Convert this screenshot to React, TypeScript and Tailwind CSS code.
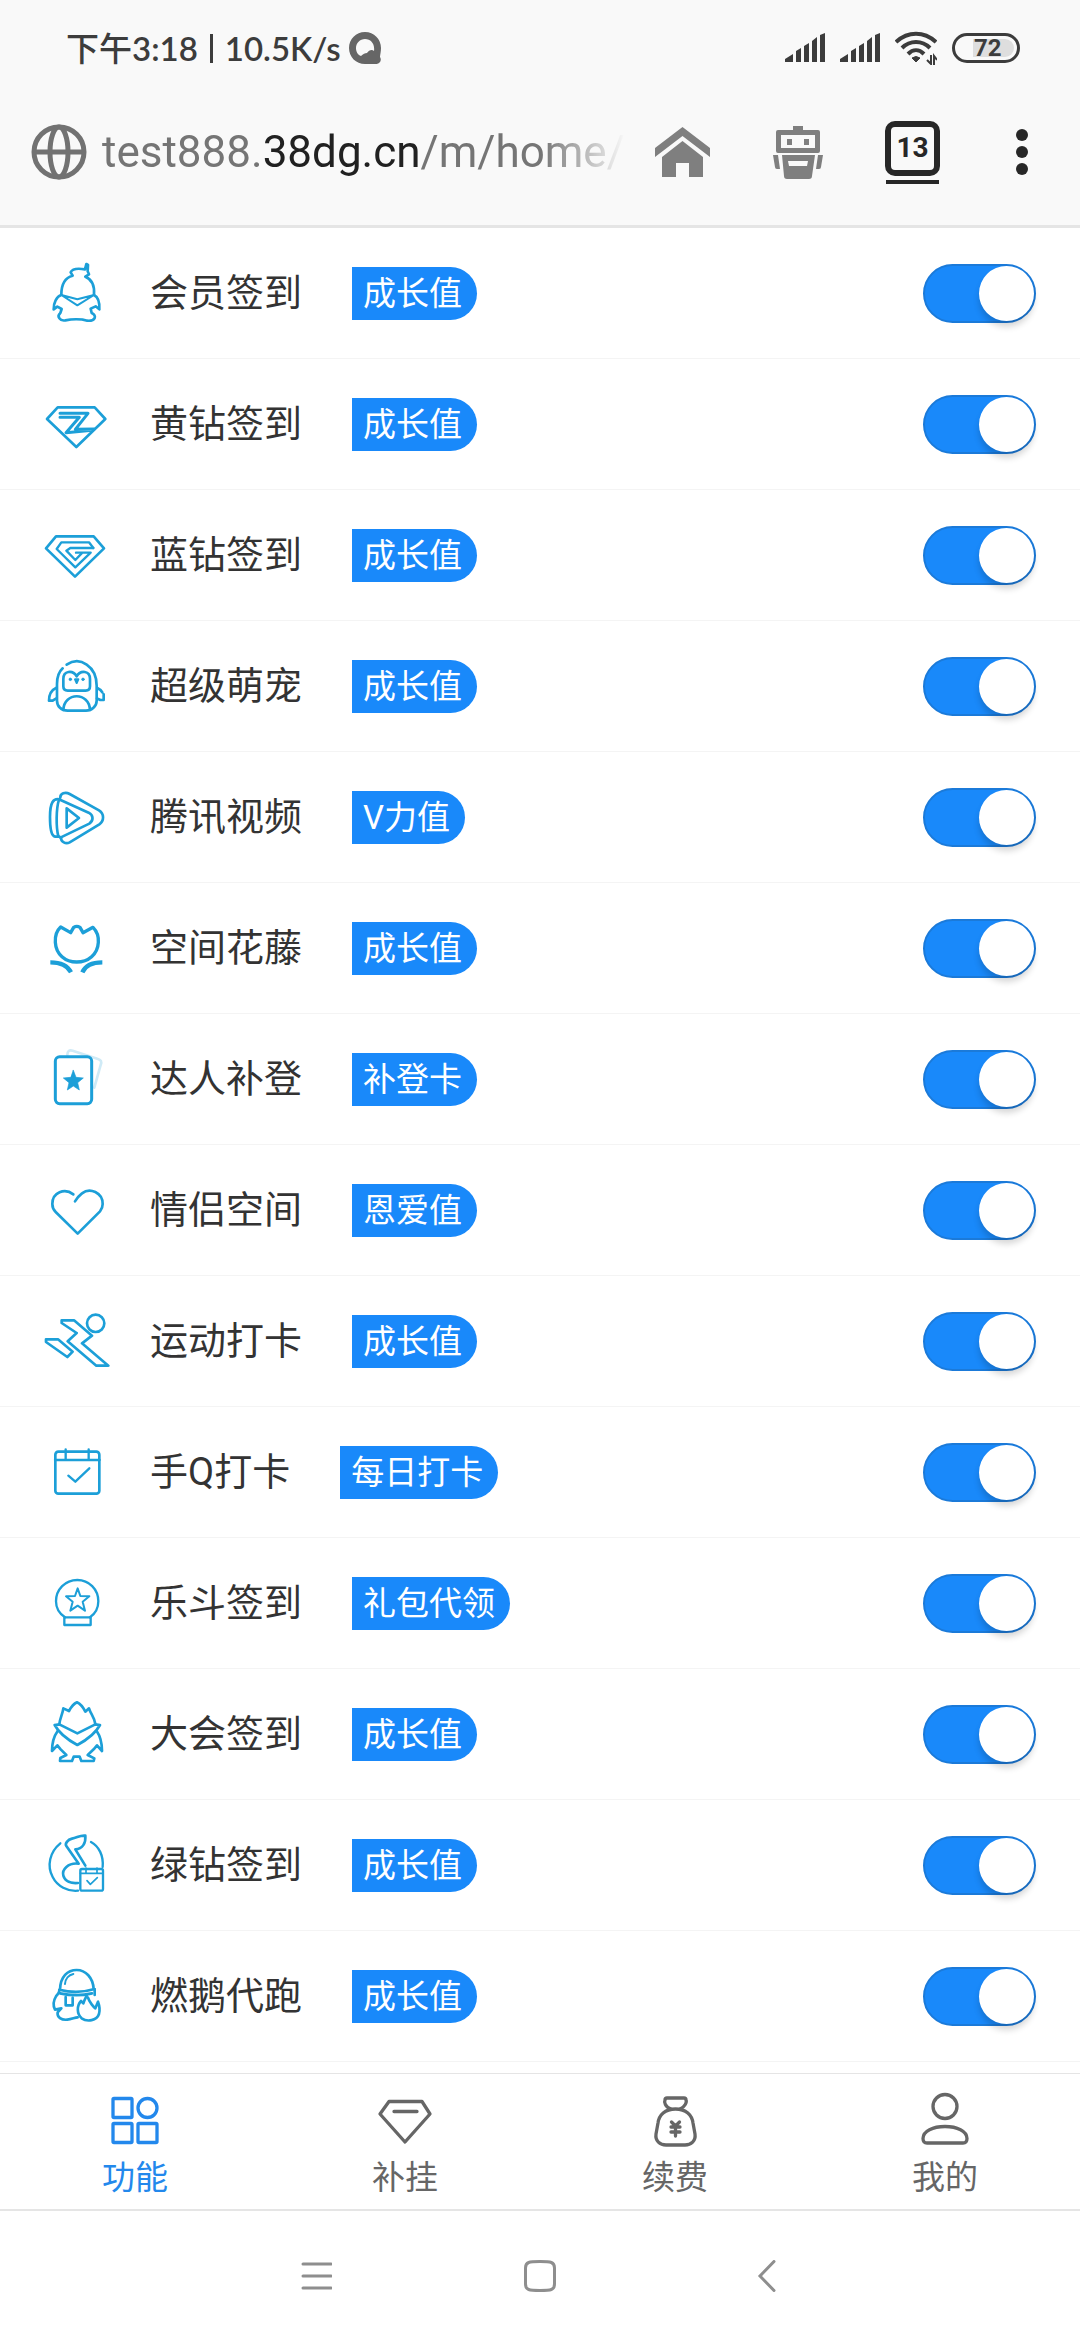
import type { ReactNode } from 'react';

interface Feature {
  id: string;
  name: string;
  tag: string;
  icon: ReactNode;
}

interface LineIconProps {
  viewBox: string;
  children: ReactNode;
}

// Shared wrapper for the blue line icons in front of each feature
function LineIcon({ viewBox, children }: LineIconProps) {
  return (
    <svg
      viewBox={viewBox}
      className="size-[66px] shrink-0 text-[#1c9fd8]"
      fill="none"
      stroke="currentColor"
      strokeWidth={8}
      strokeLinecap="round"
      strokeLinejoin="round"
      aria-hidden="true"
    >
      {children}
    </svg>
  );
}

const features: Feature[] = [
  {
    id: 'member',
    name: '会员签到',
    tag: '成长值',
    icon: (
      <LineIcon viewBox="132 93 198 198">
        <path d="M184 197C184 168 195 146 218 140L212 130C216 121 232 117 255 121L259 105L264 108L263 127L267 136L256 143C276 151 284 172 282 197" />
        <path d="M184 198L232 211L282 198L232 229Z" strokeWidth={6} />
        <path d="M184 198C170 202 160 222 161 241L172 233L185 240L181 252C169 262 180 277 196 274C215 270 245 270 262 275C286 277 292 260 275 252L272 239L287 232L298 241C299 222 294 204 282 198" />
      </LineIcon>
    ),
  },
  {
    id: 'yellow',
    name: '黄钻签到',
    tag: '成长值',
    icon: (
      <LineIcon viewBox="132 486 198 198">
        <path d="M173 535H284L316 570L229 654L141 570Z" />
        <path d="M180 553H264L226 601L282 600M180 565H238L198 611L276 604" strokeWidth={9} />
      </LineIcon>
    ),
  },
  {
    id: 'blue',
    name: '蓝钻签到',
    tag: '成长值',
    icon: (
      <LineIcon viewBox="132 879 198 198">
        <path d="M168 922H281L312 958L225 1043L138 958Z" />
        <path d="M280 957L267 940H184L170 960L226 1015L272 971H228" strokeWidth={7} />
        <path d="M280 957H211L199 965L226 993L245 973" strokeWidth={7} />
      </LineIcon>
    ),
  },
  {
    id: 'pet',
    name: '超级萌宠',
    tag: '成长值',
    icon: (
      <LineIcon viewBox="132 102 198 198">
        <path d="M200 137C240 110 290 142 290 200V245C290 262 275 275 258 275H203C184 275 171 262 171 245V195C171 175 177 158 188 148" />
        <path d="M190 202V180C190 155 218 152 230 172C242 152 270 155 270 180V202C270 210 265 215 257 215H203C195 215 190 210 190 202Z" />
        <circle cx="211" cy="181" r="4" fill="currentColor" strokeWidth={2} />
        <circle cx="249" cy="181" r="4" fill="currentColor" strokeWidth={2} />
        <path d="M225 181H235L230 192Z" fill="currentColor" strokeWidth={6} />
        <path d="M190 273C192 218 268 218 270 273" />
        <path d="M168 207C155 213 147 228 147 245H158L169 238M292 207C301 211 305 216 307 220M311 226V243H301L291 238" />
      </LineIcon>
    ),
  },
  {
    id: 'video',
    name: '腾讯视频',
    tag: 'V力值',
    icon: (
      <LineIcon viewBox="132 495 198 198">
        <path d="M181 536C180 523 196 518 209 525L297 574C313 584 313 606 298 616L209 670C197 676 183 669 183 656" />
        <path d="M180 542L266 581C281 589 281 605 268 614L181 656" />
        <path d="M178 541C160 538 150 550 150 594C150 628 154 646 161 651C166 654 173 653 178 653" />
        <path d="M177 542C168 570 168 625 175 652" />
        <path d="M200 568L237 597L200 626Z" />
      </LineIcon>
    ),
  },
  {
    id: 'flower',
    name: '空间花藤',
    tag: '成长值',
    icon: (
      <LineIcon viewBox="132 888 198 198">
        <path
          d="M212 941L182 924C169 936 165 955 166 970C168 1006 196 1029 230 1029C265 1029 293 1006 295 970C296 955 292 938 279 925L249 941L240 925C235 922 226 922 221 925L212 941Z"
          strokeWidth={10}
        />
        <path d="M151 1030C178 1030 202 1038 213 1060M307 1030C280 1030 256 1038 247 1060" strokeWidth={13} strokeLinecap="butt" />
      </LineIcon>
    ),
  },
  {
    id: 'talent',
    name: '达人补登',
    tag: '补登卡',
    icon: (
      <LineIcon viewBox="132 111 198 198">
        <path d="M202 138C202 126 208 122 218 125L292 149C303 152 306 158 302 168L283 236" className="text-[#cfeaf6]" stroke="currentColor" />
        <rect x="166" y="143" width="109" height="141" rx="13" fill="#fff" strokeWidth={9} />
        <path
          d="M220 184L228 205L250 207L233 221L238 243L220 231L202 243L207 221L190 207L212 205Z"
          fill="currentColor"
          strokeWidth={2}
        />
      </LineIcon>
    ),
  },
  {
    id: 'couple',
    name: '情侣空间',
    tag: '恩爱值',
    icon: (
      <LineIcon viewBox="132 504 198 198">
        <path d="M220 556C194 536 157 550 157 585C157 595 161 603 167 609L233 674L300 607C306 600 308 593 308 585C308 551 270 534 246 553C238 559 231 567 225 577" />
      </LineIcon>
    ),
  },
  {
    id: 'sport',
    name: '运动打卡',
    tag: '成长值',
    icon: (
      <LineIcon viewBox="132 897 198 198">
        <circle cx="287" cy="943" r="26" />
        <path d="M185 934H222L276 980L246 1003L325 1070H289L203 997L230 972L185 942Z" />
        <path d="M138 991H174L218 1028L202 1044L138 999Z" />
      </LineIcon>
    ),
  },
  {
    id: 'mobile-q',
    name: '手Q打卡',
    tag: '每日打卡',
    icon: (
      <LineIcon viewBox="132 90 198 198">
        <rect x="166" y="128" width="132" height="126" rx="9" />
        <path d="M165 153H299M197 121V151M266 121V151M205 200L226 218L268 178" strokeWidth={7} />
      </LineIcon>
    ),
  },
  {
    id: 'fight',
    name: '乐斗签到',
    tag: '礼包代领',
    icon: (
      <LineIcon viewBox="132 483 198 198">
        <path d="M195 625C178 614 168 596 168 577C168 541 196 513 232 513C267 513 295 541 295 577C295 596 286 614 270 625" strokeWidth={7} />
        <rect x="193" y="625" width="79" height="23" strokeWidth={7} />
        <path d="M233 538L241 561L268 562L248 578L255 605L233 590L211 605L218 578L198 562L225 561Z" strokeWidth={6} />
      </LineIcon>
    ),
  },
  {
    id: 'party',
    name: '大会签到',
    tag: '成长值',
    icon: (
      <LineIcon viewBox="132 876 198 198">
        <path d="M178 945C180 927 188 915 190 898L207 906C213 895 222 884 231 880C240 884 250 896 256 908L267 898C272 915 284 925 286 945" />
        <path d="M164 948L178 946L232 973L286 946L300 948C284 978 256 995 232 1008C208 995 180 978 164 948Z" />
        <path d="M173 966C160 984 156 1005 156 1026L172 1009L182 1021L199 1038L181 1047L180 1056H216L221 1043H239L244 1056H281L283 1048L263 1038L281 1021L291 1009L306 1026C306 1005 301 982 290 966" />
      </LineIcon>
    ),
  },
  {
    id: 'green',
    name: '绿钻签到',
    tag: '成长值',
    icon: (
      <LineIcon viewBox="132 99 198 198">
        <path d="M181 133C149 159 140 200 158 234C172 262 203 278 234 275M273 129C297 142 311 170 308 204" strokeWidth={7} />
        <path d="M256 200L226 151C248 150 258 132 256 110C240 108 232 116 216 119C203 122 194 134 199 141L234 191M236 194C204 190 185 212 190 230C195 248 214 254 234 252" />
        <rect x="241" y="210" width="68" height="65" rx="5" strokeWidth={7} />
        <path d="M241 223H309M258 207V221M291 207V221M261 245L271 256L292 236" strokeWidth={5} />
      </LineIcon>
    ),
  },
  {
    id: 'goose-run',
    name: '燃鹅代跑',
    tag: '成长值',
    icon: (
      <LineIcon viewBox="132 492 198 198">
        <path d="M180 572C181 533 203 513 230 513C257 513 279 536 281 570M178 572Q232 586 284 570M180 583Q230 594 276 583" />
        <path d="M195 555C196 540 206 528 220 525" strokeWidth={6} />
        <path d="M178 574C178 584 172 586 168 592C160 605 159 620 165 632L184 628L173 640C170 655 185 664 202 662C214 661 224 656 233 655" />
        <path d="M197 594V619H218V596" />
        <path d="M260 590C255 600 252 605 250 613L243 606C230 620 230 645 245 658C262 670 290 665 297 645C301 630 297 616 294 608L286 628C282 625 268 610 264 596M284 572V588" />
      </LineIcon>
    ),
  },
];

function SignalIcon() {
  return (
    <svg viewBox="0 0 40 30" className="h-[30px] w-10" fill="#3c3c3c" aria-hidden="true">
      <path d="M0 29V26L8 21V29ZM11 29V18L16 15V29ZM19 29V13L24 10V29ZM27 29V8L32 4V29ZM35 29V2L40 0V29Z" />
    </svg>
  );
}

function StatusBar() {
  return (
    <div className="flex h-24 items-center justify-between pl-[66px] pr-[60px] text-[#3c3c3c]">
      <div className="flex items-center font-['Lato','Noto_Sans_CJK_SC',sans-serif] text-[33px] font-semibold leading-10">
        <span className="font-medium">下午</span>
        <span>3:18</span>
        <span className="ml-3 h-[29px] w-[3px] bg-[#3c3c3c]" />
        <span className="ml-3">10.5K/s</span>
        <svg viewBox="0 0 32 32" className="ml-2 size-8" aria-hidden="true">
          <path
            d="M16 0C25 0 32 7 32 16C32 20 31 23 31 25C33 28 31 32 27 32H16C7 32 0 25 0 16C0 7 7 0 16 0ZM16 7C11 7 7 11 7 16C7 20 9 23 12 24C14 22 16 21 18 21C20 18 23 17 25 19C26 12 22 7 16 7Z"
            fill="#666"
            fillRule="evenodd"
          />
        </svg>
      </div>
      <div className="flex items-center gap-[15px]">
        <SignalIcon />
        <SignalIcon />
        <svg viewBox="0 0 42 34" className="h-[34px] w-[42px]" fill="none" stroke="#3c3c3c" strokeWidth={4} aria-hidden="true">
          <path d="M1 11C13 0 29 0 41 11M7 17C15 9 27 9 35 17M13 23C18 18 24 18 29 23" />
          <path d="M17 27Q21 24 25 27L21 31Z" fill="#3c3c3c" strokeWidth={1} />
          <path d="M36 24V33L32 29M39 34V25L42 29" strokeWidth={2} />
        </svg>
        <div className="flex h-[30px] w-[68px] items-center rounded-full border-3 border-[#3c3c3c] p-[3px]">
          <div className="ml-[15px] flex h-[18px] flex-1 items-center rounded-r-full bg-[#dedede] pl-px text-2xl font-bold leading-[18px]">
            72
          </div>
        </div>
      </div>
    </div>
  );
}

function AddressBar() {
  return (
    <div className="flex h-28 items-center pl-[31px] pr-1.5 text-[#272727]">
      <svg viewBox="0 0 56 56" className="size-14 shrink-0" fill="none" stroke="#727272" strokeWidth={5} aria-hidden="true">
        <circle cx="28" cy="28" r="25" />
        <ellipse cx="28" cy="28" rx="9" ry="25" />
        <path d="M3 28H53" />
      </svg>
      <button
        type="button"
        className="ml-[15px] min-w-0 flex-1 overflow-hidden whitespace-nowrap text-left text-[44px] leading-[60px] text-[#757575] [mask-image:linear-gradient(to_right,black_84%,transparent)]"
      >
        test888.<span className="text-[#212121]">38dg.cn</span>/m/home/
      </button>
      <button type="button" aria-label="主页" className="flex w-[115px] justify-center">
        <svg viewBox="0 0 55 50" className="h-[50px] w-[55px]" fill="#7f7f7f" aria-hidden="true">
          <path d="M27.500 0L55 21V30L27.500 9L0 30V21Z" />
          <path d="M27.500 14L48 30V50H34V36H21V50H7V30Z" />
        </svg>
      </button>
      <button type="button" aria-label="助手" className="flex w-[115px] justify-center">
        <svg viewBox="0 0 50 53" className="h-[53px] w-[50px]" fill="#7f7f7f" aria-hidden="true">
          <path d="M20 0H30V4H45Q47 4 47 6V25Q47 27 45 27H5Q3 27 3 25V6Q3 4 5 4H20ZM8 9V22H42V9Z" fillRule="evenodd" />
          <rect x="14" y="13" width="5" height="6" />
          <rect x="31" y="13" width="5" height="6" />
          <path d="M9 29H42L39 50Q39 53 36 53H14Q11 53 11 50ZM15 35L16 40H34L35 35Z" fillRule="evenodd" />
          <path d="M0 29H5L7 43H4Q2 43 2 41ZM50 29H45L43 43H46Q48 43 48 41Z" />
        </svg>
      </button>
      <button type="button" aria-label="标签页" className="flex w-[115px] flex-col items-center gap-1">
        <span className="flex size-[55px] items-center justify-center rounded-[10px] border-6 border-[#272727] text-[28px] font-bold leading-8">
          13
        </span>
        <span className="h-1 w-[53px] bg-[#272727]" />
      </button>
      <button type="button" aria-label="更多" className="flex w-[104px] flex-col items-center gap-[5px]">
        <span className="size-3 rounded-full bg-[#272727]" />
        <span className="size-3 rounded-full bg-[#272727]" />
        <span className="size-3 rounded-full bg-[#272727]" />
      </button>
    </div>
  );
}

function FeatureRow({ feature }: { feature: Feature }) {
  return (
    <li className="flex h-[131px] items-center border-b border-[#f4f4f4] pl-11 pr-11">
      {feature.icon}
      <label htmlFor={feature.id} className="ml-10 flex flex-1 items-center text-[38px] leading-[52px] text-[#333]">
        {feature.name}
        <span className="ml-[50px] h-[53px] rounded-r-full bg-[#1989fa] pl-[11px] pr-[15px] text-[33px] leading-[53px] text-white">
          {feature.tag}
        </span>
      </label>
      <input
        id={feature.id}
        type="checkbox"
        role="switch"
        defaultChecked
        className="flex h-[59px] w-[113px] shrink-0 appearance-none items-center rounded-full border-2 border-gray-200 bg-white before:size-[55px] before:rounded-full before:bg-white before:shadow-[0_6px_6px_rgba(0,0,0,0.16)] before:content-[''] checked:justify-end checked:border-[#1b7ad9] checked:bg-[#1989fa]"
      />
    </li>
  );
}

function TabIcon({ children }: { children: ReactNode }) {
  return (
    <svg
      viewBox="0 0 60 60"
      className="size-[60px]"
      fill="none"
      stroke="currentColor"
      strokeWidth={3.3}
      strokeLinecap="round"
      strokeLinejoin="round"
      aria-hidden="true"
    >
      {children}
    </svg>
  );
}

const tabs = [
  {
    name: '功能',
    active: true,
    icon: (
      <TabIcon>
        <rect x="8" y="8.500" width="19" height="19" rx="1" />
        <circle cx="42.500" cy="18" r="9.500" />
        <rect x="8" y="33.500" width="19" height="19" rx="1" />
        <rect x="33" y="33.500" width="19" height="19" rx="1" />
      </TabIcon>
    ),
  },
  {
    name: '补挂',
    active: false,
    icon: (
      <TabIcon>
        <path d="M14 11.500H47L55 24L30 52L5 24ZM19 21.500H42" />
      </TabIcon>
    ),
  },
  {
    name: '续费',
    active: false,
    icon: (
      <TabIcon>
        <path d="M26 19C20 17 19 12 20 10Q20 8 22 8H39Q41 8 41 10C42 12 40 17 35 19" />
        <path d="M30.500 19C20 19 14 25 13 33L11 44C10 51 15 55 21 55H40C46 55 51 51 50 44L48 33C47 25 41 19 30.500 19Z" />
        <path d="M26.500 32L30.500 36L34.500 32M26 37H35M26 42H35M30.500 36V46" />
      </TabIcon>
    ),
  },
  {
    name: '我的',
    active: false,
    icon: (
      <TabIcon>
        <circle cx="30" cy="16.500" r="12" />
        <path d="M30 36.500C42 36.500 52 41 52 48.500Q52 53 48 53H12Q8 53 8 48.500C8 41 18 36.500 30 36.500Z" />
      </TabIcon>
    ),
  },
];

export default function App() {
  return (
    <div className="flex min-h-screen flex-col bg-white font-['Roboto','Noto_Sans_CJK_SC',sans-serif]">
      <header className="border-b-3 border-[#e5e5e5] bg-[#f9f9f9] pb-[17px]">
        <StatusBar />
        <AddressBar />
      </header>

      <main className="flex-1">
        <ul>
          {features.map((feature) => (
            <FeatureRow key={feature.id} feature={feature} />
          ))}
        </ul>
      </main>

      <nav className="grid h-[138px] grid-cols-4 border-b-2 border-t border-[#e5e5e5]">
        {tabs.map((tab) => (
          <a
            key={tab.name}
            href="#"
            aria-current={tab.active ? 'page' : undefined}
            className={
              tab.active
                ? 'flex flex-col items-center pt-4 text-[#2388ec]'
                : 'flex flex-col items-center pt-4 text-[#666]'
            }
          >
            {tab.icon}
            <span className="mt-1 text-[33px] leading-[48px]">{tab.name}</span>
          </a>
        ))}
      </nav>

      {/* System navigation */}
      <div className="flex h-[129px] items-center justify-center text-[#8e8e8e]">
        <button type="button" aria-label="最近任务" className="flex w-56 justify-center">
          <svg viewBox="0 0 32 32" className="size-8" stroke="currentColor" strokeWidth={3} strokeLinecap="round" aria-hidden="true">
            <path d="M3 4H31M3 16H31M3 28H31" />
          </svg>
        </button>
        <button type="button" aria-label="桌面" className="flex w-56 justify-center">
          <svg viewBox="0 0 32 32" className="size-8" fill="none" stroke="currentColor" strokeWidth={3} aria-hidden="true">
            <path d="M16 1.500C27 1.500 30.500 2 30.500 8V24C30.500 30 27 30.500 16 30.500C5 30.500 1.500 30 1.500 24V8C1.500 2 5 1.500 16 1.500Z" />
          </svg>
        </button>
        <button type="button" aria-label="返回" className="flex w-56 justify-center">
          <svg viewBox="0 0 32 32" className="size-8" fill="none" stroke="currentColor" strokeWidth={3} strokeLinecap="round" aria-hidden="true">
            <path d="M26 1.500L12 16L26 30.500" />
          </svg>
        </button>
      </div>
    </div>
  );
}
